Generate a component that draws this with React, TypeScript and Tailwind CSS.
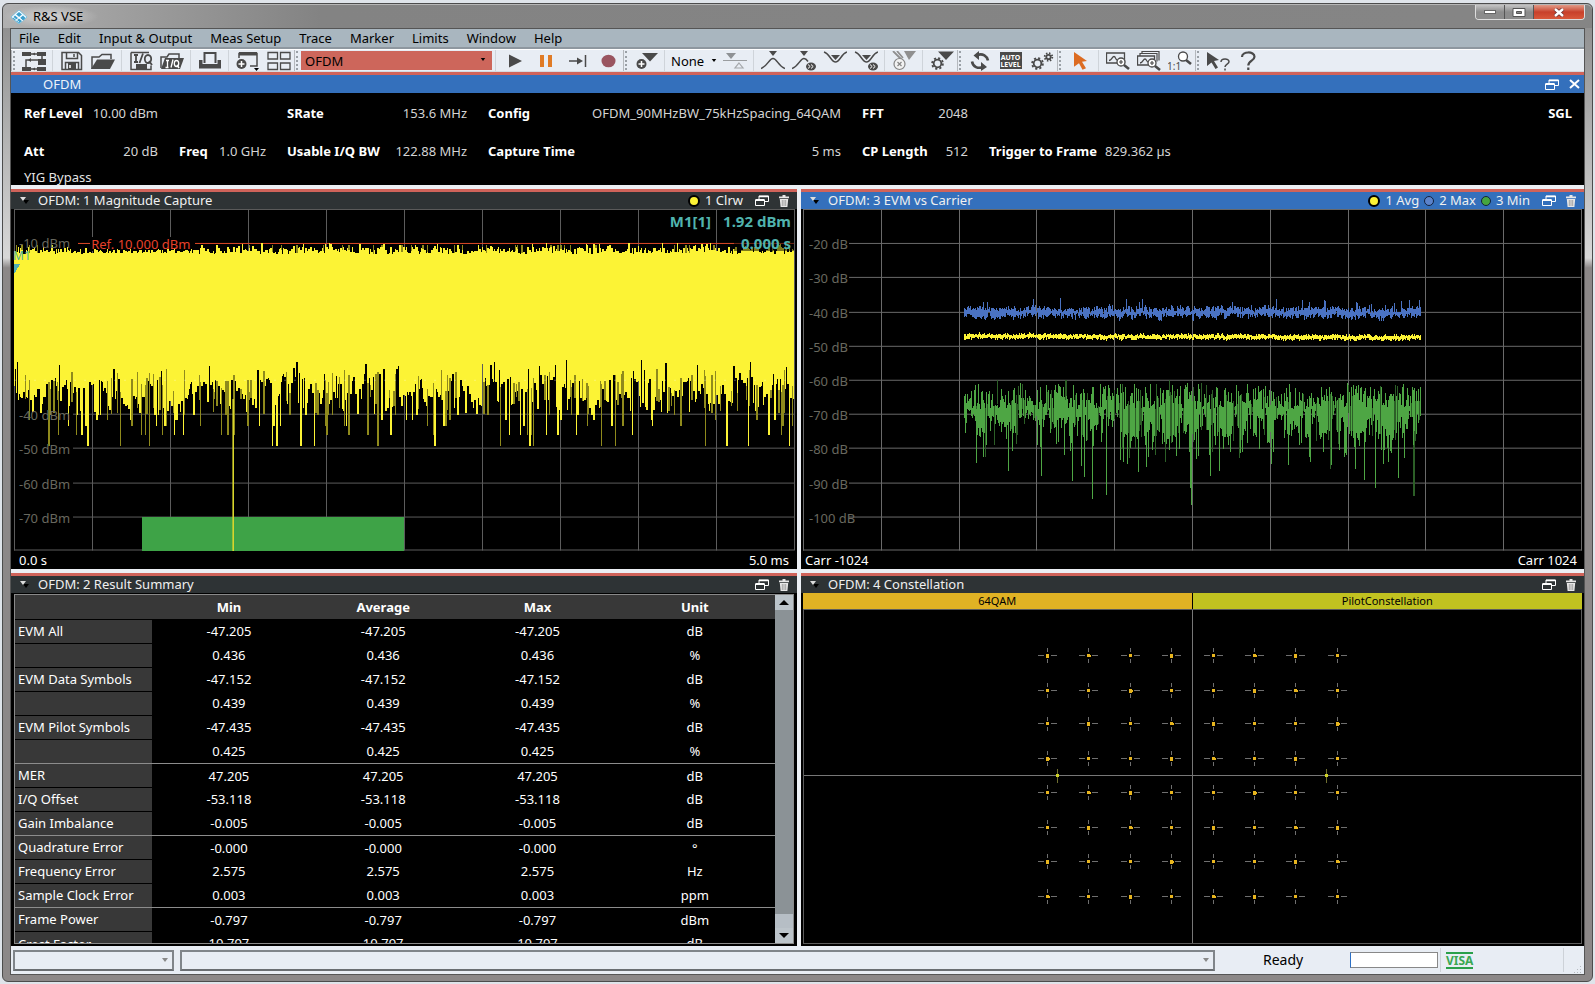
import React from "react";

const dark = "#4a4a4a";

function makeRandom(seed: number) {
  let s = seed;
  return () => {
    s = (s * 1664525 + 1013904223) % 4294967296;
    return s / 4294967296;
  };
}

/* ---------- toolbar ---------- */

function Tool({ label, children }: { label: string; children: React.ReactNode }) {
  return (
    <button type="button" aria-label={label} title={label} className="flex h-full w-[31px] shrink-0 items-center justify-center">
      <svg viewBox="0 0 24 20" className="h-5 w-6" fill="none" stroke={dark} strokeWidth="1.5">
        {children}
      </svg>
    </button>
  );
}

function Sep() {
  return (
    <span className="flex h-full w-[7px] shrink-0 justify-center">
      <span className="w-px bg-[#cfd4da]" />
    </span>
  );
}

function Grip() {
  return (
    <span className="flex h-full w-[7px] shrink-0 items-center gap-px border-l border-[#b4b8bd] py-px">
      <span className="ml-px h-full border-l-2 border-dotted border-[#9aa0a6]" />
    </span>
  );
}

function Gear({ cx, cy, r }: { cx: number; cy: number; r: number }) {
  return (
    <g>
      <circle cx={cx} cy={cy} r={r} strokeWidth="1.8" />
      <circle cx={cx} cy={cy} r={r + 1.6} strokeWidth="1.8" strokeDasharray={`${(r + 1.6) * 0.3927} ${(r + 1.6) * 0.3927}`} />
    </g>
  );
}

function NextBadge({ cx, cy }: { cx: number; cy: number }) {
  return (
    <g>
      <ellipse cx={cx} cy={cy} rx="5" ry="4" fill={dark} stroke="none" />
      <path d={`M${cx - 3} ${cy - 2}l2.2 2-2.2 2M${cx} ${cy - 2}l2.2 2-2.2 2`} stroke="#fff" strokeWidth="1" />
    </g>
  );
}

function Toolbar() {
  return (
    <div className="flex h-[23px] shrink-0 items-stretch overflow-hidden border-t border-b border-t-white border-b-[#d5d9df] bg-[#e8edf4]">
      <Grip />
      <Tool label="Measurement sequence">
        <g fill={dark} stroke="none">
          <path d="M0 1h9v4H0zM15 1h9v4h-9zM16 8h8v6h-8zM0 16h9v4H0zM15 16h9v4h-9z" />
          <path d="M13 1.5v3L10.5 3zM6 9l3-2v4zM13 16.500v3L10.500 18z" />
        </g>
        <path d="M9 3h6M20 5v4M16 9H4v4M4 12v4M9 18h6" />
      </Tool>
      <Sep />
      <Tool label="Save">
        <path d="M2 1.500h16.500l3 3v14H2zM6.500 1.500v6h11v-6M5.500 18.500v-7h13v7" />
        <path d="M8 12h8v6H8z" fill={dark} stroke="none" />
        <path d="M14 3v3" />
        <path d="M10 14v3" stroke="#fff" />
      </Tool>
      <Tool label="Open">
        <path d="M1 18V6h7l3-2.500h9V8" />
        <path d="M6 8.500h18L19 18H0z" fill={dark} stroke="none" />
      </Tool>
      <Sep />
      <Tool label="Save I/Q data">
        <path d="M2 1.500h18M2 1.500v17h20v-4" />
        <path d="M7 13h11v5H7z" fill={dark} stroke="none" />
        <path d="M5 4h4M7 4v7M5 11h4M14 2.500L10.500 12" strokeWidth="1.800" />
        <ellipse cx="19" cy="8" rx="3.200" ry="4" strokeWidth="1.800" />
        <path d="M20 10l3 4" strokeWidth="1.800" />
      </Tool>
      <Tool label="Open I/Q data">
        <path d="M1 17V6h6l2-3h10v4" />
        <path d="M5 7h19l-4 11H1z" fill={dark} stroke="none" />
        <path d="M6 9.500h3M7.500 9.500v7M5.500 16.500h3M13 8.500l-2 8" stroke="#fff" strokeWidth="1.300" />
        <ellipse cx="16.500" cy="12.500" rx="2.200" ry="3" stroke="#fff" strokeWidth="1.300" />
        <path d="M17 14l2 3" stroke="#fff" />
      </Tool>
      <Sep />
      <Tool label="Print">
        <path d="M6.500 12V2h11v10" strokeWidth="2" />
        <path d="M1 9h3.500v4h15V9H23v8.500H1z" fill={dark} stroke="none" />
      </Tool>
      <Sep />
      <Tool label="Add window">
        <path d="M3 7V2.500h18V15H14" />
        <path d="M3 1h18v3.500H3z" fill={dark} stroke="none" />
        <circle cx="5.500" cy="13" r="5" fill={dark} stroke="none" />
        <path d="M2.500 13h6M5.500 10v6" stroke="#fff" />
        <path d="M18 17h5l-2.500 3z" fill="#000" stroke="none" />
      </Tool>
      <Tool label="Window layout">
        <path d="M1 1.500h9.500v6.500H1zM13.500 1.500H23v6.500h-9.500zM1 12h9.500v6.500H1zM13.500 12H23v6.500h-9.500z" strokeWidth="1.300" />
      </Tool>
      <Grip />
      <label className="relative flex w-[191px] shrink-0 py-px">
        <span className="sr-only">Measurement channel</span>
        <select className="h-full w-full appearance-none bg-[#cd665b] pl-1 text-[13px] leading-[18px] text-black">
          <option>OFDM</option>
        </select>
        <svg viewBox="0 0 6 4" className="absolute top-2 right-1.5 h-[3px] w-1.5"><path d="M0 0h6L3 4z" /></svg>
      </label>
      <Sep />
      <Tool label="Run"><path d="M6 3.500l13 6.500-13 6.500z" fill={dark} stroke="none" /></Tool>
      <Tool label="Pause"><path d="M6 4h4v12H6zM14 4h4v12h-4z" fill="#e07b26" stroke="none" /></Tool>
      <Tool label="Single step">
        <path d="M4 10h11M20.500 4v12" />
        <path d="M12 6.500l6 3.500-6 3.500z" fill={dark} stroke="none" />
      </Tool>
      <Tool label="Record"><ellipse cx="12.500" cy="10" rx="7" ry="6.300" fill="#9a5560" stroke="none" /></Tool>
      <Grip />
      <Tool label="Add marker">
        <path d="M8 2h16l-8 8.500z" fill={dark} stroke="none" />
        <circle cx="7.500" cy="13" r="5" fill={dark} stroke="none" />
        <path d="M4.500 13h6M7.500 10v6" stroke="#fff" />
      </Tool>
      <Sep />
      <label className="relative flex w-[51px] shrink-0">
        <span className="sr-only">Marker selection</span>
        <select className="h-full w-full appearance-none bg-transparent pl-[3px] text-[13px] leading-[18px] text-black">
          <option>None</option>
        </select>
        <svg viewBox="0 0 6 4" className="absolute top-[9px] right-0.5 h-[3px] w-1.5"><path d="M0 0h6L3 4z" /></svg>
      </label>
      <Tool label="Delta marker">
        <path d="M3 2h10L8 8z" fill="#8e9194" stroke="none" />
        <path d="M0 9.500h24" stroke="#9a9da0" strokeWidth="1" />
        <path d="M16 12l4 5h-8z" stroke="#a4a7aa" strokeWidth="1.200" />
      </Tool>
      <Sep />
      <Tool label="Peak">
        <path d="M8 0h8l-4 5z" fill={dark} stroke="none" />
        <path d="M0 17.500C7 15 8 7.500 12 7.500S17 15 24 17.500" />
      </Tool>
      <Tool label="Next peak">
        <path d="M8 0h8l-4 5z" fill={dark} stroke="none" />
        <path d="M0 17.500C7 15 8 7.500 12 7.500q2 0 4 3" />
        <NextBadge cx={19} cy={15.500} />
      </Tool>
      <Tool label="Minimum">
        <path d="M8 4h9l-4.500 5z" fill={dark} stroke="none" />
        <path d="M1 1c6 2 7 10 11.500 10S18 3 24 1" />
      </Tool>
      <Tool label="Next minimum">
        <path d="M8 4h9l-4.500 5z" fill={dark} stroke="none" />
        <path d="M1 1c6 2 7 10 11.500 10S18 3 24 1" />
        <NextBadge cx={19} cy={15.500} />
      </Tool>
      <Sep />
      <Tool label="All markers off">
        <path d="M12 0h12l-7 9z" fill="#8f8f8f" stroke="none" />
        <path d="M1 0l9 9M5 0l6 7" stroke="#8f8f8f" strokeWidth="1.800" />
        <circle cx="7.500" cy="13" r="5.500" fill="#f2f2f2" stroke="#858585" strokeWidth="1.200" />
        <path d="M5.500 11l4 4M9.500 11l-4 4" stroke="#858585" strokeWidth="1.200" />
      </Tool>
      <Sep />
      <Tool label="Marker settings">
        <path d="M8 0.500h16l-8 8.500z" fill={dark} stroke="none" />
        <Gear cx={7.500} cy={12.500} r={3.800} />
      </Tool>
      <Grip />
      <Tool label="Refresh">
        <path d="M9 4c6-2 10 1 11 5.500M15 16c-5 2-10 0-11-5.500" strokeWidth="2.600" />
        <path d="M11 0v9L5.500 4.500zM13 11v9l6-4z" fill={dark} stroke="none" />
      </Tool>
      <button type="button" aria-label="Auto level" className="flex w-[31px] shrink-0 items-center justify-center">
        <span className="flex h-[17px] w-[22px] flex-col items-center justify-center bg-[#4a4a4a] text-[7px] leading-[7px] font-bold text-white">
          <span>AUTO</span>
          <span>LEVEL</span>
        </span>
      </button>
      <Tool label="Settings">
        <Gear cx={7.500} cy={12.500} r={3.800} />
        <Gear cx={18.500} cy={6} r={2.200} />
      </Tool>
      <Grip />
      <Tool label="Select">
        <path d="M6 1l13 9-5 .8 4 6.500-3.500 1.500-3.500-6.500-5 3.500z" fill="#dc6b22" stroke="none" />
      </Tool>
      <Sep />
      <Tool label="Zoom">
        <path d="M0.500 2h18v10h-18zM3 9.500c3 0 3-4 5-4s1 3.500 3.500 3.500" strokeWidth="1.300" />
        <circle cx="15" cy="11" r="4" fill="#fff" strokeWidth="1.300" />
        <path d="M13 11h4M15 9v4" strokeWidth="1.200" /><path d="M18 14l5 4" strokeWidth="2.600" />
      </Tool>
      <Tool label="Multi zoom">
        <path d="M5 3V0.500h17v9M3 5V2.500h17v8" strokeWidth="1.200" />
        <path d="M0.500 5h17v9h-17zM3 12c3 0 3-4 5-4s1 3 3.500 3" strokeWidth="1.300" />
        <circle cx="15" cy="12" r="4" fill="#fff" strokeWidth="1.300" />
        <path d="M13 12h4M15 10v4" strokeWidth="1.200" /><path d="M18 15l5 4" strokeWidth="2.600" />
      </Tool>
      <Tool label="Zoom off">
        <circle cx="15" cy="5.500" r="4.500" fill="#fff" strokeWidth="1.300" />
        <path d="M18 9l5 4" strokeWidth="2.600" />
        <text x="-1" y="18.500" fontSize="10" fill={dark} stroke="none">1:1</text>
      </Tool>
      <Grip />
      <Tool label="Context help">
        <path d="M1 1l12 8-5 1 4 6.500-2.500 1.500-4-6.500L1 15z" fill={dark} stroke="none" />
        <path d="M15 11c0-4 8-4 8-.3 0 2.500-4 2.300-4 5.300M19 17.500v2" />
      </Tool>
      <Tool label="Help">
        <path d="M5 6c0-6 12.500-6 12.500-.2 0 4-6.200 3.700-6.200 8.700M11.300 16.500v2.500" strokeWidth="2.200" />
      </Tool>
    </div>
  );
}

/* ---------- panel pieces ---------- */

function RestoreIcon() {
  return (
    <svg viewBox="0 0 14 11" className="h-[11px] w-3.5" fill="none" stroke="#fff">
      <path d="M4 4V1h9.500v5.500H10" /><path d="M4 1.500h9.500" strokeWidth="1.500" />
      <path d="M.5 5h9v5.500h-9z" /><path d="M.5 5h9" strokeWidth="2" />
    </svg>
  );
}

function TrashIcon() {
  return (
    <svg viewBox="0 0 10 12" className="h-3 w-2.5" fill="#e8e8e8">
      <path d="M0 1.500h3.500V0h3v1.500H10v1.700H0zM.8 4h8.400l-.8 8H1.600z" />
      <path d="M3.300 5v6M5 5v6M6.700 5v6" stroke="#777" strokeWidth=".6" />
    </svg>
  );
}

const legendColors = {
  yellow: "size-3 border-2 border-black bg-[#fdf335]",
  blue: "size-2.5 border border-[#12203c] bg-[#5b83cb]",
  green: "size-2.5 border border-[#12203c] bg-[#45a53f]",
};

interface PanelProps {
  title: string;
  active?: boolean;
  legend?: { color: keyof typeof legendColors; text: string }[];
  children: React.ReactNode;
}

function Panel({ title, active, legend = [], children }: PanelProps) {
  return (
    <section className="flex min-h-0 min-w-0 flex-col border-t-[3px] border-[#d0635a] bg-black">
      <header className={`flex h-[17px] shrink-0 items-center pr-2 text-[13px] leading-none text-[#f0f0f0] ${active ? "bg-[#3470bc]" : "bg-[#2e3335]"}`}>
        <svg viewBox="0 0 9 7" className="mr-[9px] ml-[9px] h-[7px] w-[9px]">
          <path d="M3 3h6L6 7z" fill="#000" /><path d="M0 0h6L3 4z" fill="#ddd" />
        </svg>
        <h2>{title}</h2>
        <div className="ml-auto flex items-center gap-[5px]">
          {legend.map((item) => (
            <span key={item.text} className="flex items-center gap-[5px]">
              <span className={`rounded-full ${legendColors[item.color]}`} />
              {item.text}
            </span>
          ))}
        </div>
        <button type="button" aria-label="Restore window" className="ml-3"><RestoreIcon /></button>
        <button type="button" aria-label="Close window" className="ml-[10px]"><TrashIcon /></button>
      </header>
      {children}
    </section>
  );
}

function AxisLabel({ y, total, text }: { y: number; total: number; text: string }) {
  return (
    <span className="absolute left-2 -translate-y-1/2 text-[13px] leading-none text-[#68685f]" style={{ top: `${(y / total) * 100}%` }}>
      {text}
    </span>
  );
}

/* ---------- magnitude capture ---------- */

function buildCapture() {
  const rnd = makeRandom(77);
  let bright = "";
  let dim = "";
  let base = 176;
  let x = 3;
  while (x < 783) {
    if (rnd() < 0.3) base = 162 + rnd() * 26;
    const r = rnd();
    const w = Math.min(783 - x, rnd() < 0.45 ? 2 : 1);
    let bottom = base + rnd() * 12;
    let shade = false;
    if (r < 0.05) bottom = 150 + rnd() * 12;
    else if (r < 0.3) { bottom = 188 + rnd() * 18; shade = rnd() < 0.45; }
    else if (r < 0.41) { bottom = [206, 211, 217][Math.floor(rnd() * 3)]; shade = rnd() < 0.45; }
    else if (r < 0.5) { bottom = [226, 226, 237][Math.floor(rnd() * 3)]; shade = rnd() < 0.45; }
    const peak = rnd();
    const behindLabel = x > 76 && x < 186;
    const top = behindLabel ? 40 + rnd() * 4 : peak < 0.12 ? 34 + rnd() * 4 : 38 + rnd() * 7;
    const y0 = Math.round(top);
    const y1 = Math.round(bottom);
    if (shade) {
      const m = Math.round(Math.min(bottom, 160 + rnd() * 24));
      bright += `M${x} ${y0}h${w}V${m}h-${w}z`;
      dim += `M${x} ${m}h${w}V${y1}h-${w}z`;
    } else {
      bright += `M${x} ${y0}h${w}V${y1}h-${w}z`;
    }
    if (peak > 0.9 && !behindLabel) dim += `M${x} 36h${w}V${y0}h-${w}z`;
    x += w;
  }
  return { bright, dim };
}

const capture = buildCapture();
const captureRows = [206, 240, 275, 309];

function MagnitudeCapture() {
  return (
    <div className="relative min-h-0 flex-1">
      <svg viewBox="0 0 786 361" preserveAspectRatio="none" className="absolute inset-0 h-full w-full" shapeRendering="crispEdges">
        <g stroke="#5c5c5c" strokeWidth="1">
          {Array.from({ length: 11 }, (_, i) => {
            const x = 3.5 + i * 78;
            return <line key={i} x1={x} x2={x} y1="0" y2="342" />;
          })}
          {captureRows.map((y) => <line key={y} x1="62" x2="783" y1={y - 0.5} y2={y - 0.5} />)}
          <line x1="3" x2="783" y1="0.5" y2="0.5" />
          <line x1="3" x2="783" y1="341.500" y2="341.500" />
        </g>
        <rect x="78" y="28" width="108" height="14" fill="#000" />
        <path d="M67 34.500h12M184 34.500H783" stroke="#e04a28" />
        <path d={capture.bright} fill="#fcf335" />
        <path d={capture.dim} fill="#8f8a1c" />
        <path d="M3 171.500H783" stroke="#fff" strokeOpacity="0.3" strokeDasharray="2 8" />
        <rect x="131" y="308" width="262" height="34" fill="#3ea347" />
        <rect x="222" y="190" width="1" height="152" fill="#d8d52c" />
        <rect x="221" y="190" width="1" height="152" fill="#d8d52c" fillOpacity="0.6" />
        <path d="M3 55h6l-5 9h-1z" fill="#4fb0b4" />
        <rect x="723" y="28" width="60" height="14" fill="#000" fillOpacity="0.5" />
      </svg>
      <AxisLabel y={34} total={361} text="-10 dBm" />
      <AxisLabel y={206} total={361} text="-40 dBm" />
      <AxisLabel y={240} total={361} text="-50 dBm" />
      <AxisLabel y={275} total={361} text="-60 dBm" />
      <AxisLabel y={309} total={361} text="-70 dBm" />
      <span className="absolute top-[9.7%] left-[10.200%] -translate-y-1/2 text-[13px] leading-none text-[#e8402a]">Ref. 10.000 dBm</span>
      <span className="absolute top-[13%] left-0.5 -translate-y-1/2 text-[12px] leading-[10px] text-[#4fb0a0]">M1</span>
      <div className="absolute top-[3px] right-1.5 flex flex-col items-end gap-1 text-[15px] leading-[18px] font-bold text-[#50b3ae]">
        <span className="flex gap-3"><span>M1[1]</span><span>1.92 dBm</span></span>
        <span>0.000 s</span>
      </div>
      <div className="absolute inset-x-0 bottom-px flex justify-between pr-2 pl-2 text-[13px] leading-4 text-white">
        <span>0.0 s</span><span>5.0 ms</span>
      </div>
    </div>
  );
}

/* ---------- EVM vs carrier ---------- */

function buildEvm() {
  const rnd = makeRandom(4242);
  let blue = "";
  let yellow = "";
  let green = "";
  let greenDim = "";
  const deep: Record<number, number> = { 175: 254, 207: 262, 240: 267, 271: 272, 283: 268, 291: 290, 305: 286, 345: 258, 389: 279, 390: 296, 409: 267, 418: 262, 470: 255, 487: 256, 509: 253, 530: 256, 563: 271, 574: 279, 597: 269 };
  let drift = 0;
  let low = 212;
  for (let x = 163; x < 620; x++) {
    if (rnd() < 0.25) drift = (rnd() - 0.5) * 4;
    if (rnd() < 0.25) low = 196 + rnd() * 28;
    const spread = 1.2 + rnd() * 4.8;
    const up = rnd() < 0.05 ? 4 + rnd() * 6 : 0;
    const c = 104 + drift + (rnd() - 0.5) * 3;
    blue += `M${x} ${(c - spread - up).toFixed(1)}h1V${(c + spread).toFixed(1)}h-1z`;
    const yc = 127.500 + (x - 163) * 0.003 + drift * 0.4 + (rnd() - 0.5) * 2;
    const ys = 1.300 + rnd() * 1.500;
    yellow += `M${x} ${(yc - ys).toFixed(1)}h1V${(yc + ys).toFixed(1)}h-1z`;
    const a = 174 + Math.pow(rnd(), 0.9) * 26;
    let b = low + rnd() * 12;
    if (rnd() < 0.32) b += rnd() * 32;
    const col = `M${x} ${a.toFixed(0)}h1V${b.toFixed(0)}h-1z`;
    if (rnd() < 0.15) greenDim += col;
    else green += col;
    if (deep[x]) green += `M${x} 200h1V${deep[x]}h-1z`;
  }
  greenDim += "M612 205h2V287h-2zM196 171h1V195h-1zM264 171h2V195h-2zM368 171h1V190h-1z";
  return { blue, yellow, green, greenDim };
}

const evm = buildEvm();
const evmRows = [34, 68, 103, 137, 171, 205, 239, 274, 308];

function EvmVsCarrier() {
  return (
    <div className="relative min-h-0 flex-1">
      <svg viewBox="0 0 783 361" preserveAspectRatio="none" className="absolute inset-0 h-full w-full" shapeRendering="crispEdges">
        <g stroke="#6a6a6a" strokeWidth="1">
          {Array.from({ length: 11 }, (_, i) => {
            const x = Math.round(2 + i * 77.8) + 0.5;
            return <line key={i} x1={x} x2={x} y1="0" y2="342" />;
          })}
          {evmRows.map((y) => <line key={y} x1="48" x2="781" y1={y + 0.5} y2={y + 0.5} />)}
          <line x1="2" x2="781" y1="0.5" y2="0.5" />
          <line x1="2" x2="781" y1="341.500" y2="341.500" />
        </g>
        <path d={evm.blue} fill="#4a72c2" />
        <path d={evm.yellow} fill="#fcf335" />
        <path d={evm.greenDim} fill="#2c5f27" />
        <path d={evm.green} fill="#4ea644" />
      </svg>
      {evmRows.map((y, i) => <AxisLabel key={y} y={y + 1} total={361} text={`-${20 + i * 10} dB`} />)}
      <div className="absolute inset-x-0 bottom-px flex justify-between pr-[7px] pl-1 text-[13px] leading-4 text-white">
        <span>Carr -1024</span><span>Carr 1024</span>
      </div>
    </div>
  );
}

/* ---------- result summary ---------- */

const results: [string, string, string, boolean?][] = [
  ["EVM All", "-47.205", "dB"],
  ["", "0.436", "%"],
  ["EVM Data Symbols", "-47.152", "dB"],
  ["", "0.439", "%"],
  ["EVM Pilot Symbols", "-47.435", "dB"],
  ["", "0.425", "%", true],
  ["MER", "47.205", "dB"],
  ["I/Q Offset", "-53.118", "dB"],
  ["Gain Imbalance", "-0.005", "dB", true],
  ["Quadrature Error", "-0.000", "°"],
  ["Frequency Error", "2.575", "Hz"],
  ["Sample Clock Error", "0.003", "ppm", true],
  ["Frame Power", "-0.797", "dBm"],
  ["Crest Factor", "10.797", "dB"],
];

function ResultSummary() {
  return (
    <div className="mx-[3px] mt-px mb-0.5 flex min-h-0 flex-1 border border-[#8a8a8a]">
      <div className="min-w-0 flex-1 overflow-hidden">
        <table className="w-full table-fixed border-collapse text-[13px] leading-4 text-white">
          <thead>
            <tr className="h-6 bg-[#383838]">
              <td className="w-[18%]" />
              <th className="w-[20.3%]">Min</th><th className="w-[20.3%]">Average</th><th className="w-[20.3%]">Max</th><th>Unit</th>
            </tr>
          </thead>
          <tbody>
            {results.map(([name, value, unit, end], i) => (
              <tr key={i} className={`h-6 ${end ? "border-b border-[#8c8c8c]" : ""}`}>
                <th scope="row" className={`border-t bg-[#383838] pl-[3px] text-left font-normal whitespace-nowrap ${i > 0 && results[i - 1][3] ? "border-[#8c8c8c]" : "border-black"}`}>{name}</th>
                <td className="text-center">{value}</td>
                <td className="text-center">{value}</td>
                <td className="text-center">{value}</td>
                <td className="text-center">{unit}</td>
              </tr>
            ))}
          </tbody>
        </table>
      </div>
      <div className="flex w-[18px] shrink-0 flex-col bg-[#8b9296]">
        <button type="button" aria-label="Scroll up" className="flex h-[15px] items-center justify-center bg-[#bcc4ca]">
          <svg viewBox="0 0 10 5" className="h-[5px] w-2.5"><path d="M0 5h10L5 0z" /></svg>
        </button>
        <div className="flex-1" />
        <div className="h-3.5 bg-[#b6bec5]" />
        <button type="button" aria-label="Scroll down" className="flex h-[15px] items-center justify-center bg-[#bcc4ca]">
          <svg viewBox="0 0 10 5" className="h-[5px] w-2.5"><path d="M0 0h10L5 5z" /></svg>
        </button>
      </div>
    </div>
  );
}

/* ---------- constellation ---------- */

function Constellation() {
  const steps = [0, 1, 2, 3, 4, 5, 6, 7];
  return (
    <div className="mx-0.5 mb-0.5 flex min-h-0 flex-1 flex-col">
      <div className="grid h-4 shrink-0 grid-cols-2 text-center text-[11px] leading-4 text-black">
        <span className="border-r border-black bg-[#e0b224]">64QAM</span>
        <span className="bg-[#c1c220]">PilotConstellation</span>
      </div>
      <svg viewBox="0 0 779 334" preserveAspectRatio="none" className="min-h-0 w-full flex-1 border border-[#5c5c5c]" shapeRendering="crispEdges">
        <path d="M389.500 0V334M0 166.500H779" stroke="#777" />
        {steps.map((r) =>
          steps.map((c) => {
            const x = Math.round(244 + c * 41.400);
            const y = Math.round(45 + r * 34.500);
            return (
              <g key={`${r}-${c}`}>
                <path d={`M${x - 9} ${y + 0.5}h6M${x + 4} ${y + 0.5}h6M${x + 0.5} ${y - 7}v4M${x + 0.5} ${y + 4}v4`} stroke="#6f6f6f" />
                <rect x={x - 1} y={y - 1} width="3" height={(r + c) % 3 ? 3 : 4} fill="#e8b51e" />
                {(r * 3 + c) % 4 === 1 && <rect x={x + 2} y={y} width="1" height="2" fill="#e8b51e" />}
              </g>
            );
          }),
        )}
        {[254, 523].map((x) => (
          <g key={x}>
            <path d={`M${x + 0.5} 160v14`} stroke="#6f6f30" />
            <rect x={x - 1} y="165" width="3" height="3" fill="#cfd226" />
          </g>
        ))}
      </svg>
    </div>
  );
}

/* ---------- channel information ---------- */

function Info({ label, value, spread = true }: { label: string; value: string; spread?: boolean }) {
  return (
    <div className={`flex whitespace-nowrap ${spread ? "justify-between" : "gap-2"}`}>
      <dt className="font-bold text-white">{label}</dt>
      <dd className="text-[#d4d4d4]">{value}</dd>
    </div>
  );
}

function ChannelBar() {
  return (
    <section className="shrink-0 border-t-[3px] border-[#d0635a]">
      <header className="flex h-[18px] items-center bg-[#3470bc] pr-1 pl-8 text-[13px] leading-none text-[#eef3fa]">
        <h1>OFDM</h1>
        <button type="button" aria-label="Restore channel" className="ml-auto"><RestoreIcon /></button>
        <button type="button" aria-label="Close channel" className="ml-[10px]">
          <svg viewBox="0 0 11 10" className="h-2.5 w-[11px]" stroke="#fff" strokeWidth="2"><path d="M1 1l9 8M10 1L1 9" /></svg>
        </button>
      </header>
      <div className="h-[92px] bg-black pt-3 pr-3 pl-[13px] text-[13px] leading-4">
        <dl className="grid grid-cols-[134px_87px_180px_353px_106px_1fr_auto] gap-x-[21px] gap-y-[22px]">
          <Info label="Ref Level" value="10.00 dBm" />
          <div />
          <Info label="SRate" value="153.6 MHz" />
          <Info label="Config" value="OFDM_90MHzBW_75kHzSpacing_64QAM" />
          <Info label="FFT" value="2048" />
          <div />
          <div className="font-bold text-white">SGL</div>
          <Info label="Att" value="20 dB" />
          <Info label="Freq" value="1.0 GHz" />
          <Info label="Usable I/Q BW" value="122.88 MHz" />
          <Info label="Capture Time" value="5 ms" />
          <Info label="CP Length" value="512" />
          <Info label="Trigger to Frame" value="829.362 µs" spread={false} />
        </dl>
        <p className="mt-2.5 text-[13px] text-[#e4e4e4]">YIG Bypass</p>
      </div>
    </section>
  );
}

const menus = ["File", "Edit", "Input & Output", "Meas Setup", "Trace", "Marker", "Limits", "Window", "Help"];

export default function App() {
  return (
    <div className="h-screen overflow-hidden bg-[#dfe4ea] pt-[3px] pr-0.5 pb-0.5 pl-0.5 font-['Noto_Sans','Open_Sans',sans-serif]">
      <div className="flex h-full flex-col rounded-md border border-[#4c4c4c] bg-linear-to-b from-[#8a8a8a] from-0% via-[#d8d8d8] via-[26%] to-[#8c8888] to-[27%] px-[7px] pb-1.5">
        <div className="-mx-[7px] flex h-6 shrink-0 items-start rounded-t-md border-t border-[#b6b6b6] bg-linear-to-r from-[#b0b0b0] via-[#838383] via-20% to-[#858585] to-90%">
          <div className="flex h-full items-center gap-1.5 bg-radial from-white/50 to-transparent to-70% pr-4 pl-2 text-[13px] leading-none text-black">
            <svg viewBox="0 0 16 14" className="h-3.5 w-4">
              <path d="M8 0l8 7-8 7-8-7z" fill="#f4fbff" stroke="#5fb7dc" strokeWidth=".7" />
              <path d="M8 2l3 2.500-3 2.500-3-2.500zM4 5.500L7 8l-3 2.500L1.500 8zM12 5.500L14.500 8 12 10.500 9 8zM8 8.500l3 2.500-3 2.200L5 11z" fill="#3b9fce" />
              <path d="M4 4l8 7M2 7l6 5" stroke="#fff" strokeWidth=".8" />
            </svg>
            R&amp;S VSE
          </div>
          <div className="mr-[7px] ml-auto flex h-[15px] overflow-hidden rounded-b border border-t-0 border-[#ddd]">
            <button type="button" aria-label="Minimize" className="flex w-[29px] items-center justify-center border-r border-[#555] bg-linear-to-b from-[#c4c4c4] to-[#8c8c8c] to-50%">
              <span className="h-1 w-3 border border-[#666] bg-white" />
            </button>
            <button type="button" aria-label="Maximize" className="flex w-[29px] items-center justify-center border-r border-[#555] bg-linear-to-b from-[#c4c4c4] to-[#8c8c8c] to-50%">
              <svg viewBox="0 0 14 9" className="h-[9px] w-3.5"><path d="M1 0.500h12v8H1z" fill="#fff" stroke="#555" /><path d="M4.500 3.500h5v2h-5z" fill="#888" stroke="#555" /></svg>
            </button>
            <button type="button" aria-label="Close" className="flex w-[50px] items-center justify-center bg-linear-to-b from-[#e09a88] via-[#c8402a] via-50% to-[#d8583a]">
              <svg viewBox="0 0 12 9" className="h-[9px] w-3"><path d="M2 1l8 7M10 1L2 8" stroke="#6b3030" strokeWidth="4" /><path d="M2 1l8 7M10 1L2 8" stroke="#fff" strokeWidth="2.500" /></svg>
            </button>
          </div>
        </div>

        <div className="flex min-h-0 flex-1 flex-col border border-[#555] bg-[#eceff4]">
          <nav className="flex h-5 shrink-0 items-center gap-[18px] border-b-2 border-[#8e979f] bg-[#a9b6bf] pl-2 text-[13px] leading-none text-black">
            {menus.map((m) => <button type="button" key={m} className="whitespace-nowrap">{m}</button>)}
          </nav>
          <Toolbar />
          <ChannelBar />

          <main className="mt-1 grid min-h-0 flex-1 grid-cols-[786fr_783fr] grid-rows-[381fr_373fr] gap-1">
            <Panel title="OFDM: 1 Magnitude Capture" legend={[{ color: "yellow", text: "1 Clrw" }]}>
              <MagnitudeCapture />
            </Panel>
            <Panel title="OFDM: 3 EVM vs Carrier" active legend={[{ color: "yellow", text: "1 Avg" }, { color: "blue", text: "2 Max" }, { color: "green", text: "3 Min" }]}>
              <EvmVsCarrier />
            </Panel>
            <Panel title="OFDM: 2 Result Summary">
              <ResultSummary />
            </Panel>
            <Panel title="OFDM: 4 Constellation">
              <Constellation />
            </Panel>
          </main>

          <footer className="flex h-7 shrink-0 items-center bg-[#e8edf4] pl-0.5 text-[13px] text-black">
            <label className="relative">
              <span className="sr-only">Message filter</span>
              <select className="block h-[21px] w-[161px] appearance-none border-2 border-[#80858a] border-b-[#6a6e72]"><option></option></select>
              <svg viewBox="0 0 6 4" className="absolute top-2 right-1.5 h-1 w-1.5"><path d="M0 0h6L3 4z" fill="#888" /></svg>
            </label>
            <label className="relative ml-1.5 w-[1035px] min-w-0">
              <span className="sr-only">Messages</span>
              <select className="block h-[21px] w-full appearance-none border-2 border-[#80858a] border-b-[#6a6e72]"><option></option></select>
              <svg viewBox="0 0 6 4" className="absolute top-2 right-1.5 h-1 w-1.5"><path d="M0 0h6L3 4z" fill="#888" /></svg>
            </label>
            <span className="ml-12 w-[87px] text-[14px] leading-5">Ready</span>
            <span className="h-4 w-[88px] shrink-0 border border-[#888] border-l-[#2c6fc4] bg-white" />
            <span className="ml-0.5 h-6 w-px bg-[#cdd2d8]" />
            <span className="ml-[5px] border-y-2 border-[#2aa04a] text-[12px] leading-[13px] font-bold text-[#3aa852]">VISA</span>
            <span className="mr-2 ml-auto h-6 w-px bg-[#cdd2d8]" />
            <svg viewBox="0 0 10 8" className="mr-0.5 h-2 w-2.5 self-end" fill="#b5bac0"><path d="M8 0h1v1H8zM5 3h1v1H5zM8 3h1v1H8zM2 6h1v1H2zM5 6h1v1H5zM8 6h1v1H8z" /></svg>
          </footer>
        </div>
      </div>
    </div>
  );
}
